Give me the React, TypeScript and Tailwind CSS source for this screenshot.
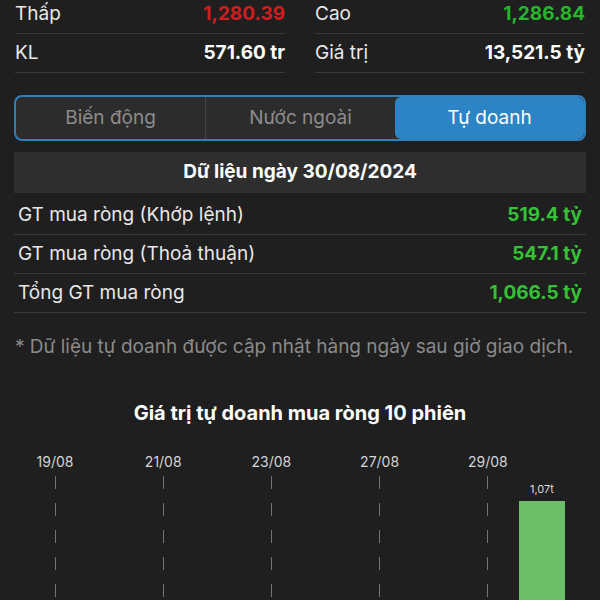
import { FC } from "react";

const font = { fontFamily: "Inter, 'Noto Sans', sans-serif" };

type StatItem = { label: string; value: string; color: string };

const leftStats: StatItem[] = [
  { label: "Thấp", value: "1,280.39", color: "text-[#d11d1d]" },
  { label: "KL", value: "571.60 tr", color: "text-white" },
];

const rightStats: StatItem[] = [
  { label: "Cao", value: "1,286.84", color: "text-[#27b62b]" },
  { label: "Giá trị", value: "13,521.5 tỷ", color: "text-white" },
];

const netRows = [
  { label: "GT mua ròng (Khớp lệnh)", value: "519.4 tỷ" },
  { label: "GT mua ròng (Thoả thuận)", value: "547.1 tỷ" },
  { label: "Tổng GT mua ròng", value: "1,066.5 tỷ" },
];

const sessions = [
  "19/08",
  "20/08",
  "21/08",
  "22/08",
  "23/08",
  "26/08",
  "27/08",
  "28/08",
  "29/08",
  "30/08",
];

const StatColumn: FC<{ items: StatItem[] }> = ({ items }) => (
  <div className="flex flex-col">
    {items.map((item) => (
      <div
        key={item.label}
        className="h-[39px] flex items-center justify-between border-b border-[#383838] text-[19px]"
      >
        <span className="text-[#e8e8e8]">{item.label}</span>
        <span className={`font-bold ${item.color}`}>{item.value}</span>
      </div>
    ))}
  </div>
);

const App: FC = () => {
  return (
    <div className="w-[600px] h-[600px] overflow-hidden bg-[#1f1f1f]" style={font}>
      {/* thống kê phiên */}
      <div className="px-[15px] -mt-[5px] grid grid-cols-2 gap-[30px]">
        <StatColumn items={leftStats} />
        <StatColumn items={rightStats} />
      </div>

      {/* tabs */}
      <div className="mx-[14px] mt-[22px] h-[46px] flex rounded-[8px] border-2 border-[#2f7fbb] bg-[#2c2c2c] overflow-hidden text-[19px]">
        <div className="flex-1 flex items-center justify-center text-[#8c8c8c] border-r border-[#454545]">
          Biến động
        </div>
        <div className="flex-1 flex items-center justify-center text-[#8c8c8c]">
          Nước ngoài
        </div>
        <div className="flex-1 flex items-center justify-center bg-[#2d84c5] text-white rounded-[6px]">
          Tự doanh
        </div>
      </div>

      {/* dữ liệu ngày */}
      <div className="mx-[14px] mt-[11px] h-[41px] bg-[#2e2e2e] flex items-center justify-center text-[19px] font-bold text-white">
        Dữ liệu ngày 30/08/2024
      </div>
      <div className="mx-[14px] pt-[3px]">
        {netRows.map((row) => (
          <div
            key={row.label}
            className="h-[39px] flex items-center justify-between px-[4px] border-b border-[#383838] text-[19px]"
          >
            <span className="text-[#e8e8e8]">{row.label}</span>
            <span className="font-bold text-[#35c135]">{row.value}</span>
          </div>
        ))}
      </div>

      <p className="mx-[15px] mt-[22px] text-[19px] leading-[24px] text-[#8a8a8a] whitespace-nowrap">
        * Dữ liệu tự doanh được cập nhật hàng ngày sau giờ giao dịch.
      </p>

      {/* biểu đồ */}
      <h3 className="mt-[42px] text-center text-[20px] leading-[24px] font-bold text-white">
        Giá trị tự doanh mua ròng 10 phiên
      </h3>
      <div className="mt-[29px] ml-[28px] w-[541px] flex">
        {sessions.map((d, i) => (
          <div key={d} className="flex-1 flex flex-col items-center">
            <div className="h-[16px] text-[14px] leading-[16px] text-[#d4d4d4]">
              {i % 2 === 0 && i < 9 ? d : ""}
            </div>
            <div className="h-[170px] w-full flex flex-col items-center">
              {i % 2 === 0 && i < 9 && (
                <div className="mt-[6px] w-px flex-1 bg-[repeating-linear-gradient(to_bottom,#737373_0_13px,transparent_13px_27px)]" />
              )}
              {i === 9 && (
                <>
                  <div className="mt-[12px] text-[11px] leading-[14px] text-[#dcdcdc]">1,07t</div>
                  <div className="mt-[5px] w-[46px] flex-1 bg-[#6cbf68]" />
                </>
              )}
            </div>
          </div>
        ))}
      </div>
    </div>
  );
};

export default App;
